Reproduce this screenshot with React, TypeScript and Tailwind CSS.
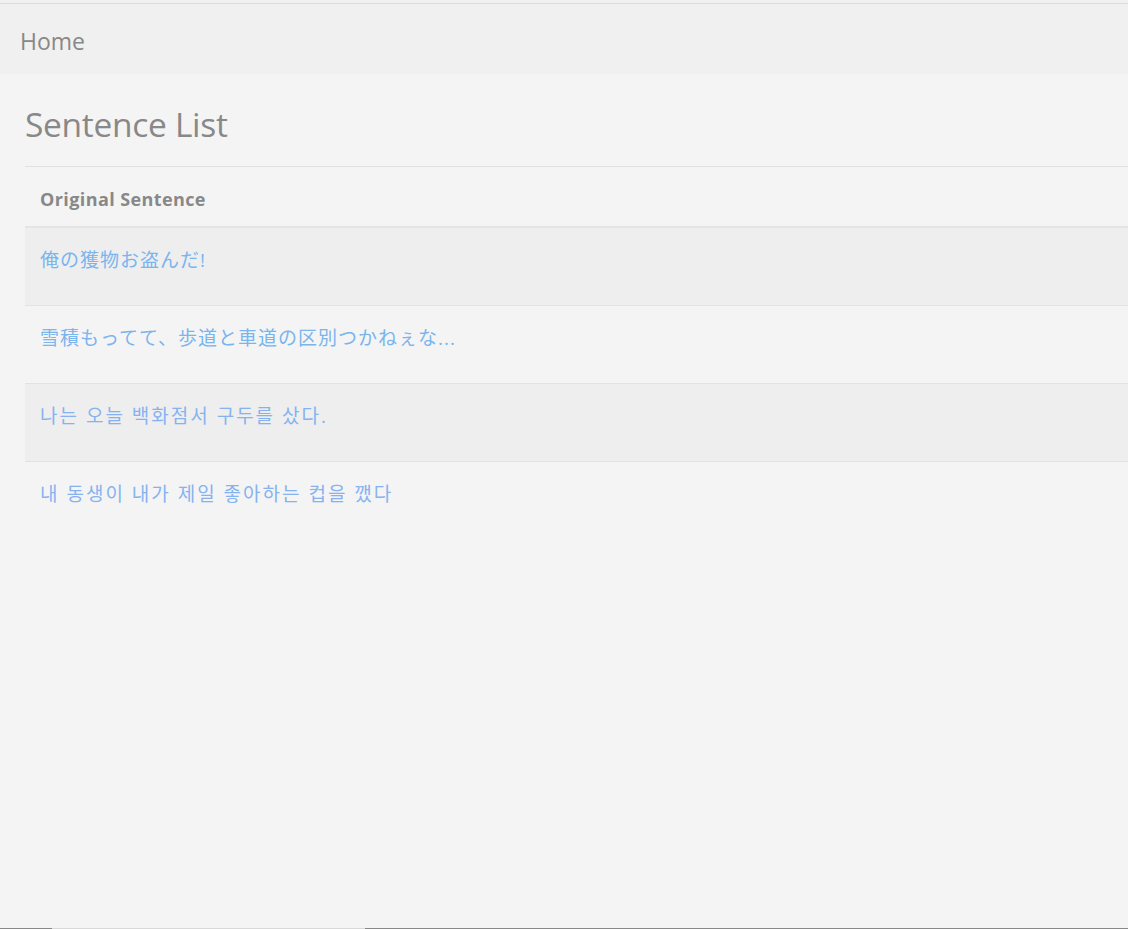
type Sentence = { text: string; lang: "ja" | "ko" };

const sentences: Sentence[] = [
  { text: "俺の獲物お盗んだ!", lang: "ja" },
  { text: "雪積もってて、歩道と車道の区別つかねぇな...", lang: "ja" },
  { text: "나는 오늘 백화점서 구두를 샀다.", lang: "ko" },
  { text: "내 동생이 내가 제일 좋아하는 컵을 깼다", lang: "ko" },
];

const font = "font-['Open_Sans','Noto_Sans_CJK_JP','Noto_Sans_CJK_KR',sans-serif]";

export default function App() {
  return (
    <div className={`min-h-[929px] h-[929px] flex flex-col bg-[#f4f4f4] overflow-hidden ${font}`}>
      {/* top nav */}
      <div className="h-[3px] bg-[#f0f0f0]" />
      <div className="h-px bg-[#dcdcdc]" />
      <nav className="h-[70px] bg-[#f0f0f0] flex items-center px-5 pt-1">
        <a className="text-[23px] text-[#888]">Home</a>
      </nav>

      <main className="flex-1 pl-[25px]">
        <h1 className="text-[33.5px] text-[#888] mt-[27px] mb-[19px] leading-[46px] tracking-[-0.3px]">
          Sentence List
        </h1>
        <div className="border-t border-[#e0e0e0]">
          <div className="h-[61px] border-b-2 border-[#e4e4e4] flex items-center pl-[15px] pt-[5px]">
            <span className="text-[18px] font-bold text-[#888] tracking-[0.4px]">Original Sentence</span>
          </div>
          {sentences.map((s, i) => (
            <div
              key={i}
              className={`h-[78px] pl-[15px] pt-[20px] ${i % 2 === 0 ? "bg-[#eeeeee]" : "bg-[#f4f4f4]"} ${i < sentences.length - 1 ? "border-b border-[#e2e2e2]" : ""}`}
            >
              <a
                className={`leading-6 ${s.lang === "ja" ? "text-[19px] tracking-[1px] text-[#7ab5ee]" : "text-[19px] tracking-[2px] text-[#86b3f0]"}`}
              >
                {s.text}
              </a>
            </div>
          ))}
        </div>
      </main>

      {/* bottom edge strip */}
      <div className="h-px flex">
        <div className="w-[52px] bg-[#888]" />
        <div className="w-[313px] bg-[#d8d8d8]" />
        <div className="flex-1 bg-[#888]" />
      </div>
    </div>
  );
}
